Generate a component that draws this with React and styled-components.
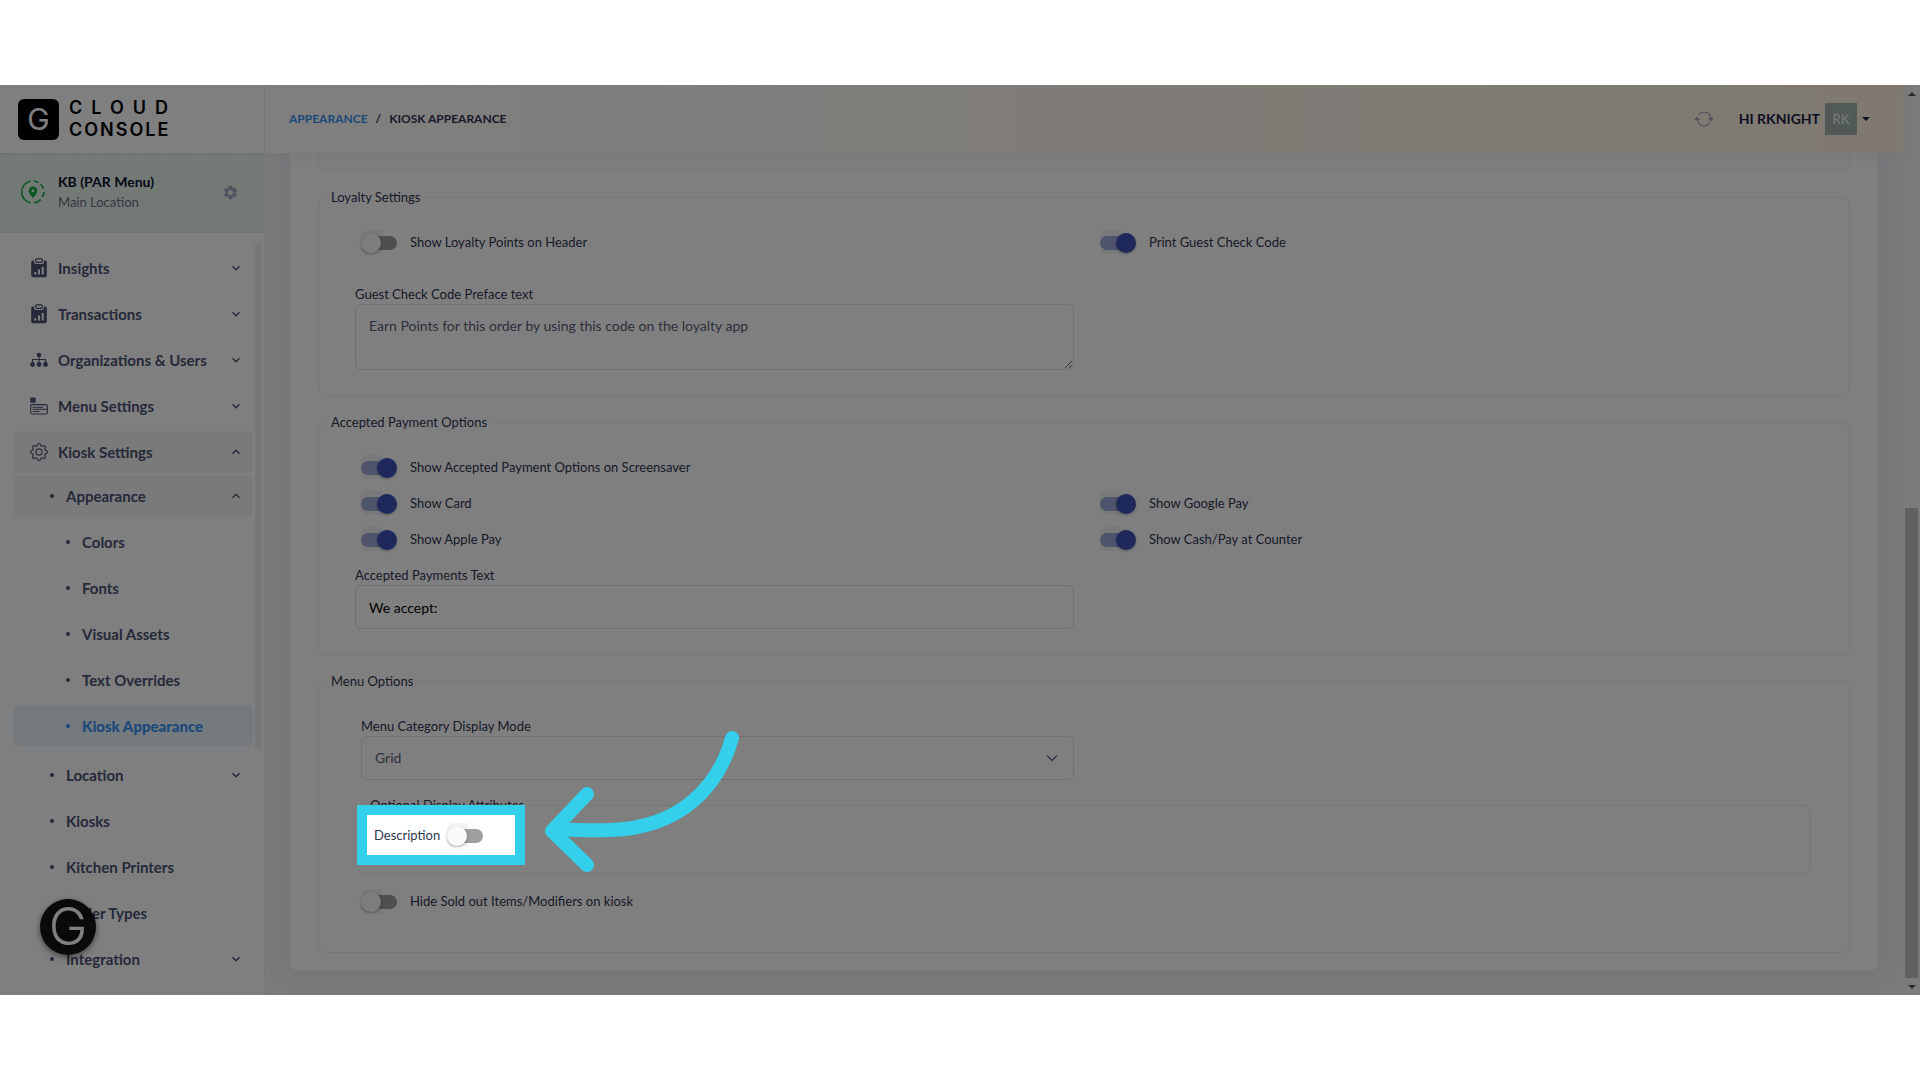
import React from "react";
import styled, { createGlobalStyle } from "styled-components";
import { BsArrowRepeat, BsGear } from "react-icons/bs";
import { MdSettings } from "react-icons/md";

const color = {
  text: "#2f3550",
  menu: "#4a5272",
  muted: "#6c7188",
  primary: "#3692f5",
  border: "#ebedf3",
  inputBorder: "#dedfe8",
  switchOn: "#3f51b5",
  accent: "#34cfeb",
};

const GlobalStyle = createGlobalStyle`
  *, *::before, *::after {
    box-sizing: border-box;
  }

  body {
    margin: 0;
    background: #ffffff;
    color: ${color.text};
    font-family: Lato, "Liberation Sans", sans-serif;
    font-size: 13px;
    line-height: 20px;
  }

  button, input, select, textarea {
    font: inherit;
    color: inherit;
  }

  ul, ol {
    list-style: none;
    margin: 0;
    padding: 0;
  }

  a {
    color: inherit;
    text-decoration: none;
  }
`;

/* ---------- icons ---------- */

const ReportIcon = () => (
  <svg width="18" height="20" viewBox="0 0 18 20">
    <path
      d="M4 2.5H3A1.8 1.8 0 0 0 1.2 4.300V17.500A1.800 1.800 0 0 0 3 19.300H15A1.800 1.800 0 0 0 16.800 17.500V4.300A1.800 1.800 0 0 0 15 2.500H14V4A2 2 0 0 1 12 6H6A2 2 0 0 1 4 4Z"
      fill="currentColor"
    />
    <rect x="5.600" y="0.900" width="6.800" height="3.400" rx="1.300" fill="none" stroke="currentColor" strokeWidth="1.200" />
    <path d="M5.300 16.500V14M9 16.500V11.500M12.700 16.500V9" stroke="#fff" strokeWidth="2" />
  </svg>
);

const OrgIcon = () => (
  <svg width="18" height="16" viewBox="0 0 18 16">
    <g fill="currentColor">
      <circle cx="9" cy="3" r="2.300" />
      <circle cx="2.500" cy="12.500" r="2.400" />
      <circle cx="9" cy="12.500" r="2.400" />
      <circle cx="15.500" cy="12.500" r="2.400" />
    </g>
    <path d="M9 4V11M2.500 11V7.500H15.500V11" fill="none" stroke="currentColor" strokeWidth="1.100" />
  </svg>
);

const MenuIcon = () => (
  <svg width="18" height="18" viewBox="0 0 18 18">
    <rect x="0.300" y="0.500" width="5.400" height="5.200" rx="1" fill="currentColor" />
    <rect x="0.700" y="7.600" width="16.600" height="9.400" rx="1.500" fill="none" stroke="currentColor" strokeWidth="1.100" />
    <path d="M2.500 10.300H13M2.500 12.300H17M2.500 14.500H9.500" stroke="currentColor" strokeWidth="1" />
  </svg>
);

const PlaceIcon = () => (
  <svg width="24" height="26" viewBox="0 0 24 26">
    <path
      d="M9.500 2.200A11 11 0 0 0 9.500 23.800M12.500 2A11 11 0 0 1 17.500 3.600M19.500 5.200A11 11 0 0 1 22.500 10M22.900 13A11 11 0 0 1 21.500 18.200M19.700 20.600A11 11 0 0 1 13 23.900"
      fill="none"
      stroke="#21b354"
      strokeWidth="1.700"
    />
    <path
      fillRule="evenodd"
      d="M12 7.400A4.300 4.300 0 0 0 7.700 11.700C7.700 14.600 12 18.800 12 18.800S16.300 14.600 16.300 11.700A4.300 4.300 0 0 0 12 7.400ZM12 10.200A1.500 1.500 0 1 1 12 13.200A1.500 1.500 0 0 1 12 10.200Z"
      fill="#0fae45"
    />
  </svg>
);

const Chevron = ({ up, size = 10, weight = 1.4 }) => (
  <svg width={size} height={size} viewBox="0 0 10 10">
    <path
      d={up ? "M1.500 6.800L5 3.300L8.500 6.800" : "M1.500 3.300L5 6.800L8.500 3.300"}
      fill="none"
      stroke="currentColor"
      strokeWidth={weight}
    />
  </svg>
);

/* ---------- shell ---------- */

const Frame = styled.div`
  position: relative;
  display: flex;
  margin: 85px 0;
  min-height: calc(100vh - 170px);
  overflow: hidden;
  background: #f5f6fa;
`;

const Sidebar = styled.aside`
  position: relative;
  z-index: 1;
  flex: none;
  width: 265px;
  background: #ffffff;
  border-right: 1px solid #eeeef2;
`;

const Main = styled.div`
  flex: 1;
  min-width: 0;
`;

/* ---------- sidebar ---------- */

const Brand = styled.div`
  display: flex;
  align-items: center;
  gap: 10px;
  height: 68px;
  padding-left: 18px;
  color: #000000;
`;

const BrandMark = styled.div`
  display: grid;
  place-items: center;
  width: 41px;
  height: 41px;
  border-radius: 6px;
  background: #000000;
  color: #ffffff;
  font: 400 30px/40px Inter, sans-serif;
`;

const BrandName = styled.div`
  display: flex;
  flex-direction: column;
  font: 600 18px/22px Inter, sans-serif;
`;

const BrandLine = styled.span`
  letter-spacing: ${({ $wide }) => ($wide ? "9px" : "2px")};
`;

const LocationBar = styled.div`
  display: flex;
  align-items: center;
  height: 80px;
  padding: 0 25px 2px 21px;
  border-top: 1px dashed #dde5df;
  border-bottom: 1px dashed #dde5df;
  background: #e6f3ea;
`;

const LocationText = styled.div`
  flex: 1;
  margin-left: 13px;
`;

const LocationName = styled.div`
  font-size: 14px;
  font-weight: 700;
  color: #0c1030;
`;

const LocationSub = styled.div`
  font-size: 13px;
  color: ${color.muted};
`;

const IconButton = styled.button`
  display: flex;
  padding: 0;
  border: 0;
  background: none;
  color: #a3a7bd;
`;

const MenuArea = styled.div`
  display: flex;
  padding-top: 10px;
`;

const MenuList = styled.ul`
  flex: 1;
  display: flex;
  flex-direction: column;
  gap: 4px;
  padding: 4px 2px 0 13px;
`;

const SubList = styled.ul`
  display: flex;
  flex-direction: column;
  gap: 4px;
  margin-top: ${({ $deep }) => ($deep ? "4px" : "2px")};
  margin-bottom: ${({ $deep }) => ($deep ? "3px" : "0")};
`;

const indent = [17, 36, 52];

const MenuLink = styled.a`
  display: flex;
  align-items: center;
  height: 42px;
  padding: 0 12px 0 ${({ $level }) => indent[$level]}px;
  border-radius: 6px;
  background: ${({ $active, $open }) =>
    $active ? "#ebf4ff" : $open ? "#f4f4f5" : "transparent"};
  color: ${({ $active }) => ($active ? color.primary : color.menu)};
  font-size: 15px;
  font-weight: ${({ $active }) => ($active ? 900 : 700)};
`;

const MenuGlyph = styled.span`
  display: grid;
  place-items: center;
  width: 18px;
  margin-right: 10px;
`;

const Bullet = styled.span`
  width: 4px;
  height: 4px;
  margin: 0 12px 0 1px;
  border-radius: 50%;
  background: currentColor;
`;

const MenuLabel = styled.span`
  flex: 1;
`;

const MenuScroll = styled.div`
  width: 7px;
  height: 505px;
  margin-right: 2px;
  background: #f0f0f1;
`;

const HelpButton = styled.button`
  position: absolute;
  left: 40px;
  bottom: 40px;
  width: 56px;
  height: 56px;
  padding: 0;
  border: 0;
  border-radius: 50%;
  background: #141414;
  box-shadow: 0 2px 6px rgba(0, 0, 0, 0.5);
  color: #ffffff;
  font: 300 52px/56px Inter, sans-serif;
`;

/* ---------- header ---------- */

const Header = styled.header`
  position: relative;
  display: flex;
  align-items: center;
  justify-content: space-between;
  height: 68px;
  padding: 0 33px 0 24px;
  background: linear-gradient(90deg, #ffffff, #fff3e2);
  box-shadow: 0 5px 15px rgba(82, 63, 105, 0.06);
`;

const Breadcrumb = styled.ol`
  display: flex;
  gap: 8px;
  font-size: 12px;
  font-weight: 700;
  text-transform: uppercase;
`;

const CrumbLink = styled.a`
  color: ${color.primary};
`;

const HeaderTools = styled.div`
  display: flex;
  align-items: center;
  gap: 4px;
`;

const RefreshButton = styled(IconButton)`
  margin-right: 21px;
`;

const UserButton = styled.button`
  display: flex;
  align-items: center;
  gap: 5px;
  padding: 0;
  border: 0;
  background: none;
  color: #1b2045;
  font-size: 14px;
  font-weight: 700;
`;

const Avatar = styled.span`
  display: grid;
  place-items: center;
  width: 32px;
  height: 32px;
  background: #a5b5b1;
  color: #f5f8f8;
  font-size: 13px;
  font-weight: 400;
`;

const Caret = styled.span`
  border: 4px solid transparent;
  border-top-color: currentColor;
  border-bottom: 0;
`;

/* ---------- settings card ---------- */

const Card = styled.form`
  margin: 0 25px 24px;
  padding: 0 28px 18px;
  border-radius: 0 0 8px 8px;
  background: #ffffff;
  box-shadow: 0 0 30px rgba(82, 63, 105, 0.1);
`;

const PreviousPanel = styled.div`
  height: 17px;
  margin-bottom: 17px;
  border: 1px solid ${color.border};
  border-top: 0;
  border-radius: 0 0 8px 8px;
`;

const Panel = styled.fieldset`
  min-width: 0;
  margin: ${({ $nested }) => ($nested ? "15px 2px 9px" : "0 0 16px")};
  padding: 0;
  border: 1px solid ${color.border};
  border-radius: 8px;

  &:last-child {
    margin-bottom: 0;
  }
`;

const Legend = styled.legend`
  height: 20px;
  margin-left: 8px;
  padding: 0 4px;
`;

const PanelBody = styled.div`
  padding: 17px 36px ${({ $tall }) => ($tall ? "33px" : "25px")};
`;

const NestedBody = styled.div`
  padding: 2px 16px 20px;
`;

const Columns = styled.div`
  display: grid;
  grid-template-columns: 1fr 1fr;
  column-gap: 20px;
`;

const Field = styled.div`
  display: flex;
  flex-direction: column;
  padding-top: ${({ $spaced }) => ($spaced ? "24px" : "8px")};
  padding-left: ${({ $inset }) => ($inset ? "6px" : "0")};
`;

const controlStyle = `
  width: 100%;
  padding: 11px 13px;
  border: 1px solid ${color.inputBorder};
  border-radius: 6px;
  background: #ffffff;
  font-size: 14px;
  outline: none;
`;

const TextArea = styled.textarea`
  ${controlStyle}
  height: 66px;
  color: #5a6078;
`;

const TextInput = styled.input`
  ${controlStyle}
  height: 44px;
  color: #000000;
`;

const SelectWrap = styled.div`
  display: grid;
  align-items: center;

  & > * {
    grid-area: 1 / 1;
  }

  & > svg {
    justify-self: end;
    margin-right: 15px;
    color: #5a6078;
    pointer-events: none;
  }
`;

const Select = styled.select`
  ${controlStyle}
  height: 44px;
  appearance: none;
  color: #5a6078;
`;

const SwitchRow = styled.div`
  display: flex;
  align-items: center;
  gap: ${({ $inline }) => ($inline ? "7px" : "13px")};
  height: 36px;
  padding-left: ${({ $inline }) => ($inline ? "0" : "6px")};
`;

const SwitchInput = styled.input.attrs({ type: "checkbox", role: "switch" })`
  position: relative;
  appearance: none;
  width: 36px;
  height: 24px;
  margin: 0;
  border-radius: 6px;
  background: linear-gradient(#f3f3f8, #f3f3f8) left / 21px 24px no-repeat;

  &::before {
    content: "";
    position: absolute;
    top: 6px;
    left: 2px;
    width: 34px;
    height: 14px;
    border-radius: 7px;
    background: #9e9e9e;
  }

  &::after {
    content: "";
    position: absolute;
    top: 3px;
    left: 0;
    width: 20px;
    height: 20px;
    border-radius: 50%;
    background: #fafafa;
    box-shadow: 0 1px 3px rgba(0, 0, 0, 0.3);
  }

  &:checked::before {
    left: 0;
    background: #9fa8da;
  }

  &:checked::after {
    left: 16px;
    background: ${color.switchOn};
  }
`;

/* ---------- guided tour ---------- */

const TourTarget = styled.div`
  position: relative;
  width: max-content;
`;

const Spotlight = styled.div`
  position: absolute;
  z-index: 5;
  top: -12px;
  left: -17px;
  width: 168px;
  height: 60px;
  border: 10px solid ${color.accent};
  box-shadow: 0 0 0 3000px rgba(0, 0, 0, 0.5);
  pointer-events: none;
`;

const TourArrow = styled.svg`
  position: absolute;
  top: -84px;
  left: 178px;
  width: 194px;
  height: 142px;
  fill: none;
  stroke: ${color.accent};
  stroke-width: 14;
  stroke-linecap: round;
  stroke-linejoin: round;
`;

/* ---------- page scrollbar ---------- */

const ScrollTrack = styled.div`
  display: flex;
  flex-direction: column;
  align-items: center;
  flex: none;
  width: 17px;
  padding: 7px 0 6px;
  background: #f6f6f6;
`;

const ScrollArrow = styled.span`
  border: 4px solid transparent;
  border-top: ${({ $up }) => ($up ? "0" : "4px solid #555555")};
  border-bottom: ${({ $up }) => ($up ? "4px solid #555555" : "0")};
`;

const ScrollThumb = styled.div`
  flex: 0 0 calc(52% + 4px);
  width: 13px;
  margin: auto 0 7px;
  background: #c1c1c1;
`;

function Switch({ id, label, on }) {
  return (
    <SwitchRow>
      <SwitchInput id={id} defaultChecked={on} />
      <label htmlFor={id}>{label}</label>
    </SwitchRow>
  );
}

function MenuItem({ label, icon, level = 0, open, active, expandable, children }) {
  return (
    <li>
      <MenuLink href="#" $level={level} $open={open} $active={active}>
        {icon ? <MenuGlyph>{icon}</MenuGlyph> : <Bullet />}
        <MenuLabel>{label}</MenuLabel>
        {expandable ? <Chevron up={open} /> : null}
      </MenuLink>
      {children}
    </li>
  );
}

function SideMenu() {
  return (
    <Sidebar>
      <Brand>
        <BrandMark>G</BrandMark>
        <BrandName>
          <BrandLine $wide>CLOUD</BrandLine>
          <BrandLine>CONSOLE</BrandLine>
        </BrandName>
      </Brand>
      <LocationBar>
        <PlaceIcon />
        <LocationText>
          <LocationName>KB (PAR Menu)</LocationName>
          <LocationSub>Main Location</LocationSub>
        </LocationText>
        <IconButton type="button" aria-label="Location settings">
          <MdSettings size={17} />
        </IconButton>
      </LocationBar>
      <MenuArea>
        <MenuList>
          <MenuItem label="Insights" icon={<ReportIcon />} expandable />
          <MenuItem label="Transactions" icon={<ReportIcon />} expandable />
          <MenuItem label="Organizations & Users" icon={<OrgIcon />} expandable />
          <MenuItem label="Menu Settings" icon={<MenuIcon />} expandable />
          <MenuItem label="Kiosk Settings" icon={<BsGear size={18} />} expandable open>
            <SubList>
              <MenuItem label="Appearance" level={1} expandable open>
                <SubList $deep>
                  <MenuItem label="Colors" level={2} />
                  <MenuItem label="Fonts" level={2} />
                  <MenuItem label="Visual Assets" level={2} />
                  <MenuItem label="Text Overrides" level={2} />
                  <MenuItem label="Kiosk Appearance" level={2} active />
                </SubList>
              </MenuItem>
              <MenuItem label="Location" level={1} expandable />
              <MenuItem label="Kiosks" level={1} />
              <MenuItem label="Kitchen Printers" level={1} />
              <MenuItem label="Order Types" level={1} />
              <MenuItem label="Integration" level={1} expandable />
            </SubList>
          </MenuItem>
        </MenuList>
        <MenuScroll />
      </MenuArea>
      <HelpButton type="button">G</HelpButton>
    </Sidebar>
  );
}

function TopBar() {
  return (
    <Header>
      <Breadcrumb>
        <li>
          <CrumbLink href="#">Appearance</CrumbLink>
        </li>
        <li>/</li>
        <li>Kiosk Appearance</li>
      </Breadcrumb>
      <HeaderTools>
        <RefreshButton type="button" aria-label="Refresh">
          <BsArrowRepeat size={20} />
        </RefreshButton>
        <UserButton type="button">
          HI RKNIGHT
          <Avatar>RK</Avatar>
          <Caret />
        </UserButton>
      </HeaderTools>
    </Header>
  );
}

function LoyaltySettings() {
  return (
    <Panel>
      <Legend>Loyalty Settings</Legend>
      <PanelBody>
        <Columns>
          <Switch id="loyalty-header" label="Show Loyalty Points on Header" />
          <Switch id="print-code" label="Print Guest Check Code" on />
          <Field $spaced>
            <label htmlFor="preface">Guest Check Code Preface text</label>
            <TextArea
              id="preface"
              defaultValue="Earn Points for this order by using this code on the loyalty app"
            />
          </Field>
        </Columns>
      </PanelBody>
    </Panel>
  );
}

function PaymentOptions() {
  return (
    <Panel>
      <Legend>Accepted Payment Options</Legend>
      <PanelBody>
        <Switch id="pay-screensaver" label="Show Accepted Payment Options on Screensaver" on />
        <Columns>
          <Switch id="pay-card" label="Show Card" on />
          <Switch id="pay-google" label="Show Google Pay" on />
          <Switch id="pay-apple" label="Show Apple Pay" on />
          <Switch id="pay-cash" label="Show Cash/Pay at Counter" on />
          <Field>
            <label htmlFor="pay-text">Accepted Payments Text</label>
            <TextInput id="pay-text" type="text" defaultValue="We accept:" />
          </Field>
        </Columns>
      </PanelBody>
    </Panel>
  );
}

function MenuOptions() {
  return (
    <Panel>
      <Legend>Menu Options</Legend>
      <PanelBody $tall>
        <Columns>
          <Field $inset>
            <label htmlFor="category-mode">Menu Category Display Mode</label>
            <SelectWrap>
              <Select id="category-mode" defaultValue="grid">
                <option value="grid">Grid</option>
              </Select>
              <Chevron size={14} weight={1} />
            </SelectWrap>
          </Field>
        </Columns>
        <Panel $nested>
          <Legend>Optional Display Attributes</Legend>
          <NestedBody>
            <TourTarget>
              <SwitchRow $inline>
                <label htmlFor="description">Description</label>
                <SwitchInput id="description" />
              </SwitchRow>
              <Spotlight>
                <TourArrow viewBox="545 731 194 142">
                  <path d="M732 738C719 785 682 828 610 830C590 831 572 830 556 829" />
                  <path d="M587 794L552 831L587 865" />
                </TourArrow>
              </Spotlight>
            </TourTarget>
          </NestedBody>
        </Panel>
        <Switch id="hide-sold-out" label="Hide Sold out Items/Modifiers on kiosk" />
      </PanelBody>
    </Panel>
  );
}

function App() {
  return (
    <>
      <GlobalStyle />
      <Frame>
        <SideMenu />
        <Main>
          <TopBar />
          <Card>
            <PreviousPanel />
            <LoyaltySettings />
            <PaymentOptions />
            <MenuOptions />
          </Card>
        </Main>
        <ScrollTrack>
          <ScrollArrow $up />
          <ScrollThumb />
          <ScrollArrow />
        </ScrollTrack>
      </Frame>
    </>
  );
}

export default App;
